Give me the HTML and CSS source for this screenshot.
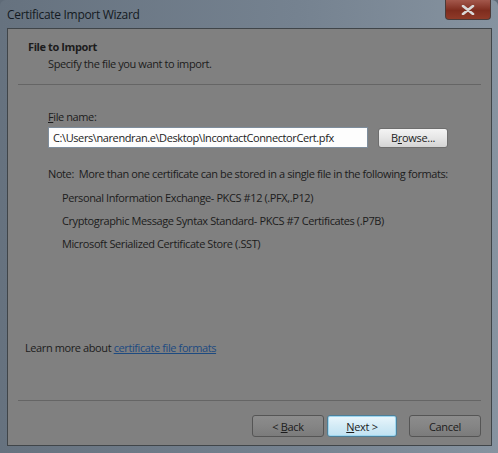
FILE: index.html
```html
<!DOCTYPE html>
<html lang="en">
<head>
    <meta charset="UTF-8">
    <title>Certificate Import Wizard</title>
    <link rel="stylesheet" href="styles.css">
</head>
<body>
    <div class="window">
        <div class="titlebar">
            <span class="title">Certificate Import Wizard</span>
            <div class="close">
                <svg width="14" height="10" viewBox="0 0 14 10">
                    <path d="M2 1 L12 9 M12 1 L2 9" stroke="#d8d8d8" stroke-width="2.6" stroke-linecap="round"/>
                </svg>
            </div>
        </div>
        <div class="client">
            <div class="header">
                <div class="heading">File to Import</div>
                <div class="subheading">Specify the file you want to import.</div>
            </div>
            <div class="body">
                <label class="field-label"><u>F</u>ile name:</label>
                <div class="file-row">
                    <div class="file-input">C:\Users\narendran.e\Desktop\IncontactConnectorCert.pfx</div>
                    <button class="btn light">B<u>r</u>owse...</button>
                </div>
                <p class="note">Note:&nbsp; More than one certificate can be stored in a single file in the following formats:</p>
                <ul class="formats">
                    <li>Personal Information Exchange- PKCS #12 (.PFX,.P12)</li>
                    <li>Cryptographic Message Syntax Standard- PKCS #7 Certificates (.P7B)</li>
                    <li>Microsoft Serialized Certificate Store (.SST)</li>
                </ul>
                <div class="learn">Learn more about <a href="#">certificate file formats</a></div>
            </div>
            <div class="footer">
                <button class="btn">&lt; <u>B</u>ack</button>
                <button class="btn focused"><u>N</u>ext &gt;</button>
                <button class="btn cancel">Cancel</button>
            </div>
        </div>
    </div>
</body>
</html>
```

FILE: styles.css
```css
body {
    margin: 0;
    font-family: "Open Sans", "Noto Sans", sans-serif;
    font-size: 11px;
    letter-spacing: -0.4px;
    color: #1c1c1c;
    background: #5f6b78;
}

.window {
    width: 498px;
    height: 453px;
    box-sizing: border-box;
    padding: 0 6px 7px 7px;
    background: linear-gradient(to right, #66727f, #758290 60%, #8693a0);
    border-radius: 6px 6px 0 0;
    display: flex;
    flex-direction: column;
}

.titlebar {
    height: 28px;
    display: flex;
    align-items: flex-start;
    justify-content: space-between;
}

.title {
    font-size: 12px;
    letter-spacing: -0.3px;
    color: #141a22;
    margin-top: 6px;
}

.close {
    width: 44px;
    height: 19px;
    margin-right: 1px;
    border: 1px solid #4a3a38;
    border-top: none;
    border-radius: 0 0 4px 4px;
    background: linear-gradient(#a3584c, #7e2c1e 55%, #8f3a28);
    display: flex;
    align-items: center;
    justify-content: center;
}

.client {
    flex: 1;
    background: #808080;
    border: 1px solid #404549;
    display: flex;
    flex-direction: column;
}

.header {
    margin: 0 10px;
    padding: 10px 0 0 10px;
    height: 56px;
    box-sizing: border-box;
    border-bottom: 1px solid #656565;
}

.heading {
    font-weight: bold;
    font-size: 11px;
}

.subheading {
    margin-top: 2px;
    padding-left: 20px;
}

.body {
    flex: 1;
    padding: 25px 0 0 40px;
    display: flex;
    flex-direction: column;
}

.field-label {
    line-height: 14px;
}

.file-row {
    display: flex;
    align-items: center;
    gap: 10px;
    margin-top: 3px;
}

.file-input {
    width: 314px;
    height: 19px;
    line-height: 19px;
    padding-left: 4px;
    background: #fdfdfd;
    border: 1px solid #7e8d9c;
    font-size: 11px;
}

.btn {
    font-family: inherit;
    font-size: 11px;
    letter-spacing: -0.3px;
    color: #1c1c1c;
    width: 72px;
    height: 22px;
    padding: 0;
    border: 1px solid #555;
    border-radius: 3px;
    background: linear-gradient(#8c8c8c, #858585 50%, #7b7b7b);
}

.btn.light {
    width: 70px;
    height: 20px;
    border-color: #6e6e6e;
    background: linear-gradient(#f4f4f4, #e6e6e6 50%, #d4d4d4);
}

.btn.focused {
    width: 70px;
    border-color: #4d7f99;
    background: linear-gradient(#eaf6fc, #d3ebf6 50%, #c0e2f2);
    box-shadow: inset 0 0 0 1px #9ed6ef;
}

.note {
    margin: 18px 0 0 0;
}

.formats {
    list-style: none;
    margin: 9px 0 0 14px;
    padding: 0;
}

.formats li {
    line-height: 15px;
    margin-bottom: 8px;
}

.learn {
    margin-top: auto;
    margin-left: -23px;
    margin-bottom: 45px;
}

.learn a {
    color: #1d4a80;
}

.footer {
    margin: 0 10px;
    border-top: 1px solid #656565;
    height: 45px;
    box-sizing: border-box;
    display: flex;
    justify-content: flex-end;
    align-items: flex-start;
    padding-top: 14px;
    gap: 3px;
}

.btn.cancel {
    margin-left: 9px;
}
```
